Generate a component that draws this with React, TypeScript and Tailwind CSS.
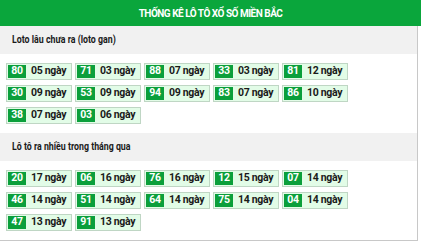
import React from 'react';

type Item = { num: string; days: string };

const ganList: Item[] = [
  { num: '80', days: '05' },
  { num: '71', days: '03' },
  { num: '88', days: '07' },
  { num: '33', days: '03' },
  { num: '81', days: '12' },
  { num: '30', days: '09' },
  { num: '53', days: '09' },
  { num: '94', days: '09' },
  { num: '83', days: '07' },
  { num: '86', days: '10' },
  { num: '38', days: '07' },
  { num: '03', days: '06' },
];

const hotList: Item[] = [
  { num: '20', days: '17' },
  { num: '06', days: '16' },
  { num: '76', days: '16' },
  { num: '12', days: '15' },
  { num: '07', days: '14' },
  { num: '46', days: '14' },
  { num: '51', days: '14' },
  { num: '64', days: '14' },
  { num: '75', days: '14' },
  { num: '04', days: '14' },
  { num: '47', days: '13' },
  { num: '91', days: '13' },
];

const LotoCell: React.FC<{ item: Item }> = ({ item }) => (
  <div className="flex h-[17px] w-[66px] border border-[#bfd6c4] bg-[#e2fce7] p-px">
    <span className="flex w-[18px] shrink-0 items-center justify-center bg-[#0b9f3b] text-[10.5px] font-bold leading-none tracking-[-0.3px] text-white">
      {item.num}
    </span>
    <span className="flex items-center whitespace-nowrap pl-[5px] text-[10.5px] font-bold leading-none tracking-[-0.3px] text-[#1a1a1a]">
      {item.days} ngày
    </span>
  </div>
);

const Section: React.FC<{ title: string; items: Item[] }> = ({ title, items }) => (
  <div>
    <div className="flex h-[28px] items-center bg-[#f1f1f1] pl-[12px]">
      <span className="inline-block origin-left scale-x-[0.8] whitespace-nowrap text-[11px] font-bold text-[#1a1a1a]">
        {title}
      </span>
    </div>
    <div className="flex flex-wrap gap-x-[3px] gap-y-[5px] py-[9px] pl-[6px] pr-[66px]">
      {items.map((item) => (
        <LotoCell key={item.num} item={item} />
      ))}
    </div>
  </div>
);

export default function App() {
  return (
    <div
      className="w-[421px] bg-white"
      style={{ fontFamily: 'Roboto, "Liberation Sans", sans-serif' }}
    >
      <div className="flex h-[26px] items-center justify-center bg-[#0aa63c] text-[10px] font-bold tracking-[-0.5px] text-white">
        THỐNG KÊ LÔ TÔ XỔ SỐ MIỀN BẮC
      </div>
      <div className="w-[418px] border-r border-b border-[#c8c8c8]">
        <Section title="Loto lâu chưa ra (loto gan)" items={ganList} />
        <Section title="Lô tô ra nhiều trong tháng qua" items={hotList} />
      </div>
    </div>
  );
}
